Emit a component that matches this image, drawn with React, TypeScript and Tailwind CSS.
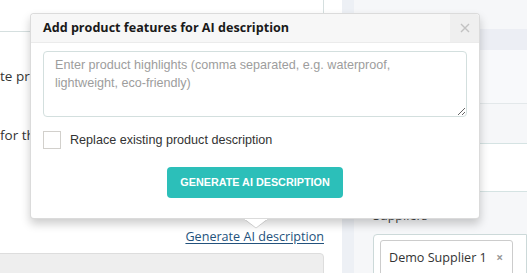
import React from "react";

const sans = "[font-family:'Open_Sans',sans-serif]";
const arial = "[font-family:'Liberation_Sans',Arial,sans-serif]";

function AiPopover() {
  return (
    <div className="absolute left-[30px] top-[13px] w-[450px] h-[206px] bg-white rounded-[4px] border border-[rgba(0,0,0,0.14)] shadow-[0_5px_10px_rgba(0,0,0,0.2)]">
      {/* header */}
      <div className="flex h-[29px] bg-[#f7f7f7] border-b border-[#ebebeb] rounded-t-[4px]">
        <div className={`flex-1 pl-[12px] flex items-center text-[12.6px] font-bold text-[#1a1a1a] ${sans}`}>
          Add product features for AI description
        </div>
        <div className="w-[29px] flex items-center justify-center bg-[#efefef] rounded-tr-[4px]">
          <svg width="10" height="10" viewBox="0 0 10 10">
            <path d="M1 1 L9 9 M9 1 L1 9" stroke="#c2c2c2" strokeWidth="1.4" />
          </svg>
        </div>
      </div>

      <div className="px-[12px] pt-[8px]">
        <textarea
          placeholder="Enter product highlights (comma separated, e.g. waterproof, lightweight, eco-friendly)"
          className={`block w-[424px] h-[66px] border border-[#d3dfde] rounded-[4px] px-[11px] pt-[4px] text-[12.6px] leading-[18px] text-[#333] placeholder:text-[#9d9d9d] outline-none resize-y ${arial}`}
        />

        <label className="flex items-center mt-[14px] h-[18px]">
          <span className="w-[18px] h-[18px] border border-[#d2d0cc] bg-white" />
          <span className={`ml-[9px] text-[12.6px] text-[#333] ${arial}`}>
            Replace existing product description
          </span>
        </label>

        <div className="flex justify-center mt-[18px]">
          <button
            className={`w-[176px] h-[31px] rounded-[4px] bg-[#2cbfb9] text-white text-[10.8px] font-bold ${arial}`}
          >
            GENERATE AI DESCRIPTION
          </button>
        </div>
      </div>

      {/* arrow */}
      <svg
        className="absolute left-[214px] top-[205px]"
        width="22"
        height="10"
        viewBox="0 0 22 10"
      >
        <path d="M0 0.5 L11 9 L22 0.5" fill="white" stroke="rgba(0,0,0,0.16)" strokeWidth="1" />
        <rect x="0" y="0" width="22" height="1" fill="white" />
      </svg>
    </div>
  );
}

export default function App() {
  return (
    <div className={`relative w-[527px] h-[273px] overflow-hidden flex bg-white ${sans}`}>
      {/* left panel */}
      <div className="w-[342px] shrink-0 bg-white">
        <div className="w-[324px] h-[32px] border-b border-r border-[#d5dfdf]" />
        <div className="w-[30px] overflow-hidden mt-[34px] h-[20px] text-[13.5px] leading-[20px] text-[#333] whitespace-nowrap">
          te pro
        </div>
        <div className="w-[30px] overflow-hidden mt-[39px] h-[20px] text-[13.5px] leading-[20px] text-[#333] whitespace-nowrap">
          for th
        </div>
        <div className="w-[324px] mt-[82px] h-[20px] flex justify-end">
          <a className="text-[12.6px] leading-[20px] text-[#23527c] underline underline-offset-2">
            Generate AI description
          </a>
        </div>
        <div className="mt-[6px] -ml-[4px] w-[328px] h-[40px] bg-[#eeeeee] border border-[#dddddd] rounded-[4px]" />
      </div>

      {/* divider strip */}
      <div className="w-[12px] shrink-0 bg-[#edf0f5]" />

      {/* right panel */}
      <div className="flex-1 bg-[#f6f7f9]">
        <div className="h-[29px]" />
        <div className="h-[21px] bg-[#eceef4]" />
        <div className="h-[54px] bg-[#f8f9fb] border-b border-[#e3e8ea]" />
        <div className="h-[40px] border-b border-[#d5e3e3]" />
        <div className="h-[48px] bg-white border-b border-[#d5e3e3]" />
        <div className="pl-[19px] mt-[14px] h-[20px] text-[12.6px] leading-[20px] text-[#444]">Suppliers</div>
        <div className="ml-[19px] mt-[8px] h-[60px] bg-white border border-[#ccd9d9] rounded-l-[4px] pl-[6px] pt-[5px]">
          <div className="w-[133px] h-[40px] border border-[#cccccc] rounded-[3px] flex items-start pt-[7px] pl-[8px] whitespace-nowrap">
            <span className="text-[12.6px] leading-[20px] text-[#333]">Demo Supplier 1</span>
            <span className="ml-auto mr-[9px] text-[12px] leading-[20px] font-bold text-[#999]">×</span>
          </div>
        </div>
      </div>

      <AiPopover />
    </div>
  );
}
